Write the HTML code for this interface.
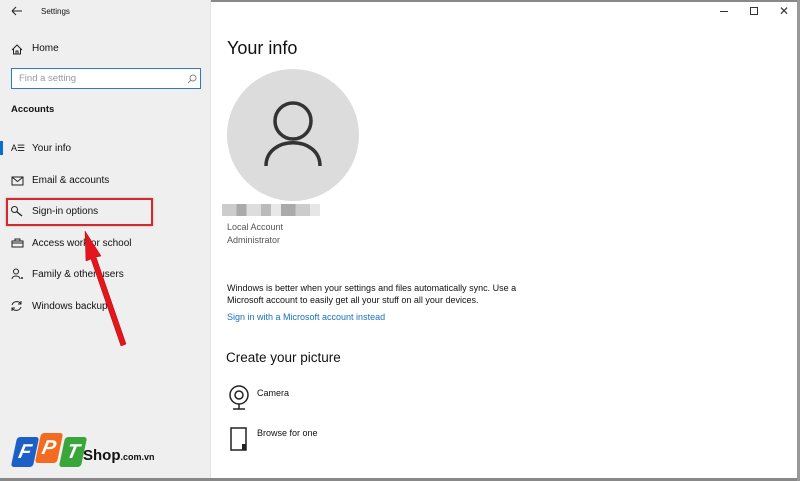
<!DOCTYPE html>
<html><head><meta charset="utf-8"><style>
*{margin:0;padding:0;box-sizing:border-box}
body{width:800px;height:481px;overflow:hidden;font-family:"Liberation Sans",sans-serif;background:#fff;position:relative;color:#111}
.side{position:absolute;left:0;top:0;width:211px;height:481px;background:#efefef;border-right:1px solid #e2e2e2}
.t{position:absolute;font-size:10px;white-space:nowrap}
.ic{position:absolute}
</style></head><body>
<div style="position:absolute;left:0;top:0;width:800px;height:2px;background:#888"></div>
<div class="side"></div>
<svg class="ic" style="left:11px;top:6px" width="12" height="10"><path d="M1 5H11M1 5L5 1M1 5L5 9" stroke="#222" fill="none" stroke-width="1"/></svg>
<div class="t" style="left:41px;top:7px;font-size:8px">Settings</div>
<svg class="ic" style="left:11px;top:44px" width="12" height="11"><path d="M1 6L6 1L11 6M2.5 5V10H9.5V5M5 10V7H7V10" stroke="#222" fill="none"/></svg>
<div class="t" style="left:32px;top:43px;font-size:10px">Home</div>
<div style="position:absolute;left:11px;top:68px;width:190px;height:21px;border:1px solid #2a7ad4;background:#fff"></div>
<div class="t" style="left:19px;top:73px;color:#999;font-size:9.5px">Find a setting</div>
<svg class="ic" style="left:187px;top:74px" width="10" height="10"><circle cx="6" cy="4" r="3" stroke="#888" fill="none"/><path d="M4 6L1 9" stroke="#888"/></svg>
<div class="t" style="left:11px;top:104px;font-weight:bold;font-size:9.5px">Accounts</div>
<div style="position:absolute;left:0;top:141px;width:3px;height:14px;background:#0a6fd0"></div>
<div class="t" style="left:11px;top:143px;font-size:9px">A☰</div>
<div class="t" style="left:32px;top:143px">Your info</div>
<svg class="ic" style="left:11px;top:176px" width="13" height="10"><rect x="1" y="1" width="11" height="8" stroke="#222" fill="none"/><path d="M1 1L6.5 5.5L12 1" stroke="#222" fill="none"/></svg>
<div class="t" style="left:32px;top:175px">Email &amp; accounts</div>
<svg class="ic" style="left:10px;top:205px" width="14" height="12"><circle cx="4.5" cy="4.5" r="3" stroke="#222" fill="none"/><path d="M6.5 6.5L12 11" stroke="#222" stroke-width="1.3"/></svg>
<div class="t" style="left:32px;top:206px">Sign-in options</div>
<div style="position:absolute;left:6px;top:198px;width:147px;height:28px;border:2px solid #d6262e;box-shadow:0 0 2px rgba(0,0,0,.3)"></div>
<svg class="ic" style="left:11px;top:238px" width="13" height="10"><rect x="1" y="3" width="11" height="6" stroke="#222" fill="none"/><rect x="4" y="1" width="5" height="2" stroke="#222" fill="none"/><path d="M1 5H12" stroke="#222"/></svg>
<div class="t" style="left:32px;top:238px">Access work or school</div>
<svg class="ic" style="left:11px;top:268px" width="13" height="12"><circle cx="5" cy="3.5" r="2.5" stroke="#222" fill="none"/><path d="M1 11C1 7 9 7 9 11" stroke="#222" fill="none"/><circle cx="11" cy="10" r="1" fill="#222"/></svg>
<div class="t" style="left:32px;top:269px">Family &amp; other users</div>
<svg class="ic" style="left:10px;top:300px" width="13" height="12"><path d="M2 5A5 5 0 0 1 11 4M11 7A5 5 0 0 1 2 8M11 1V4H8M2 11V8H5" stroke="#222" fill="none"/></svg>
<div class="t" style="left:32px;top:301px">Windows backup</div>
<svg class="ic" style="left:0;top:0" width="211" height="481"><path d="M85 231L101 256L96 257L126 344L121 346L91 259L86 261Z" fill="#e3151d" stroke="#b00" stroke-width=".5"/></svg>
<div style="position:absolute;left:14px;top:437px;display:flex;gap:2px">
<div style="width:22px;height:30px;background:#1c5fc7;transform:skewX(-12deg);border-radius:3px;color:#fff;font-weight:bold;font-size:20px;text-align:center;line-height:30px;font-style:italic">F</div>
<div style="width:22px;height:30px;background:#f36b21;transform:skewX(-12deg);border-radius:3px;color:#fff;font-weight:bold;font-size:20px;text-align:center;line-height:30px;font-style:italic;margin-top:-4px">P</div>
<div style="width:22px;height:30px;background:#3aa53a;transform:skewX(-12deg);border-radius:3px;color:#fff;font-weight:bold;font-size:20px;text-align:center;line-height:30px;font-style:italic">T</div>
</div>
<div class="t" style="left:83px;top:447px;font-weight:bold;font-size:15px;color:#111">Shop<span style="font-size:9px">.com.vn</span></div>
<div style="position:absolute;left:720px;top:11px;width:8px;height:1px;background:#333"></div>
<div style="position:absolute;left:750px;top:7px;width:8px;height:8px;border:1px solid #333"></div>
<div class="t" style="left:779px;top:4px;font-size:12px;color:#333">✕</div>
<div class="t" style="left:227px;top:38px;font-size:18px;color:#111">Your info</div>
<div style="position:absolute;left:227px;top:69px;width:132px;height:132px;border-radius:50%;background:#dcdcdc"></div>
<svg class="ic" style="left:227px;top:69px" width="132" height="132"><circle cx="66" cy="52" r="18" stroke="#333" stroke-width="3.5" fill="none"/><path d="M39 97C39 66 93 66 93 97" stroke="#333" stroke-width="3.5" fill="none"/></svg>
<div style="position:absolute;left:222px;top:204px;width:98px;height:12px;background:linear-gradient(90deg,#ccc 0 15%,#aaa 15% 25%,#ddd 25% 40%,#bbb 40% 50%,#e8e8e8 50% 60%,#aaa 60% 75%,#ccc 75% 90%,#e6e6e6 90%)"></div>
<div class="t" style="left:227px;top:222px;font-size:9px;color:#555">Local Account</div>
<div class="t" style="left:227px;top:235px;font-size:9px;color:#555">Administrator</div>
<div class="t" style="left:227px;top:283px;font-size:9px">Windows is better when your settings and files automatically sync. Use a</div>
<div class="t" style="left:227px;top:295px;font-size:9px">Microsoft account to easily get all your stuff on all your devices.</div>
<div class="t" style="left:227px;top:312px;font-size:9px;color:#1a6fc0">Sign in with a Microsoft account instead</div>
<div class="t" style="left:226px;top:350px;font-size:13.5px">Create your picture</div>
<svg class="ic" style="left:227px;top:384px" width="24" height="28"><circle cx="12" cy="11" r="9" stroke="#222" stroke-width="1.5" fill="none"/><circle cx="12" cy="11" r="4" stroke="#222" stroke-width="1.5" fill="none"/><path d="M12 20V25M6 25H18" stroke="#222" stroke-width="1.5"/></svg>
<div class="t" style="left:257px;top:388px;font-size:9px">Camera</div>
<svg class="ic" style="left:227px;top:426px" width="22" height="26"><rect x="4" y="2" width="15" height="22" stroke="#222" stroke-width="1.5" fill="none"/><rect x="15" y="18" width="4" height="6" fill="#222"/></svg>
<div class="t" style="left:257px;top:428px;font-size:9px">Browse for one</div>
<div style="position:absolute;left:0;top:478px;width:800px;height:3px;background:#888"></div>
<div style="position:absolute;left:797px;top:0;width:3px;height:481px;background:#999"></div>
</body></html>
